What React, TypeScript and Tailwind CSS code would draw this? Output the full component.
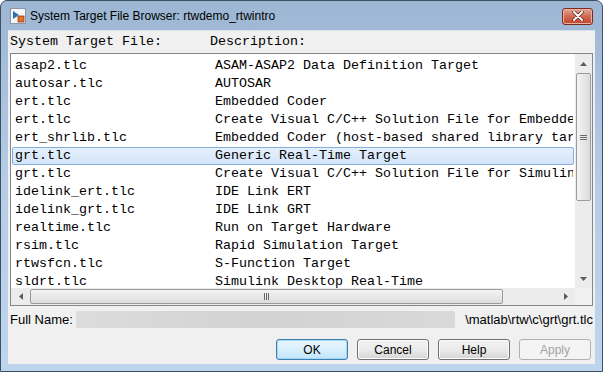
const rows = [
  { file: "asap2.tlc", desc: "ASAM-ASAP2 Data Definition Target" },
  { file: "autosar.tlc", desc: "AUTOSAR" },
  { file: "ert.tlc", desc: "Embedded Coder" },
  { file: "ert.tlc", desc: "Create Visual C/C++ Solution File for Embedded Coder" },
  { file: "ert_shrlib.tlc", desc: "Embedded Coder (host-based shared library target)" },
  { file: "grt.tlc", desc: "Generic Real-Time Target", selected: true },
  { file: "grt.tlc", desc: "Create Visual C/C++ Solution File for Simulink Coder" },
  { file: "idelink_ert.tlc", desc: "IDE Link ERT" },
  { file: "idelink_grt.tlc", desc: "IDE Link GRT" },
  { file: "realtime.tlc", desc: "Run on Target Hardware" },
  { file: "rsim.tlc", desc: "Rapid Simulation Target" },
  { file: "rtwsfcn.tlc", desc: "S-Function Target" },
  { file: "sldrt.tlc", desc: "Simulink Desktop Real-Time" },
]

const mono = "font-['Liberation_Mono','Courier_New',monospace] text-[13.33px] leading-[16px]"
const ui = "font-['Liberation_Sans','Noto_Sans',sans-serif] text-[12px]"

function Arrow({ dir }: { dir: "up" | "down" | "left" | "right" }) {
  const pts = {
    up: "0,4 3.5,0 7,4",
    down: "0,0 7,0 3.5,4",
    left: "4,0 4,7 0,3.5",
    right: "0,0 4,3.5 0,7",
  }[dir]
  const vertical = dir === "up" || dir === "down"
  return (
    <svg width={vertical ? 7 : 4} height={vertical ? 4 : 7}>
      <polygon points={pts} fill="#5b5b5b" />
    </svg>
  )
}

function Button({ label, focus, disabled }: { label: string; focus?: boolean; disabled?: boolean }) {
  return (
    <div
      className={`w-[72px] h-[21px] rounded-[3px] border flex items-center justify-center ${ui} text-[12.5px] ${
        disabled
          ? "border-[#adb2b5] bg-[#f4f4f4] text-[#a3a3a3]"
          : focus
          ? "border-[#3c7fb1] bg-gradient-to-b from-[#eaf6fd] via-[#d9f0fc] to-[#bee6fd] text-black shadow-[inset_0_0_0_1px_#a7d9f5]"
          : "border-[#707070] bg-gradient-to-b from-[#f2f2f2] via-[#ebebeb] to-[#d5d5d5] text-black shadow-[inset_0_0_0_1px_#fcfcfc]"
      }`}
    >
      {label}
    </div>
  )
}

export default function App() {
  return (
    <div className="w-[603px] h-[372px] flex flex-col border border-[#3d4f63] rounded-t-[7px] bg-gradient-to-b from-[#9cb6d3] via-[#b6cde7] to-[#bed5ee] overflow-hidden">
      {/* title bar */}
      <div className="h-[29px] flex items-center pl-[9px] pr-[9px] shrink-0">
        <svg width="16" height="16" viewBox="0 0 16 16" className="shrink-0 mt-[1px]">
          <rect x="0.5" y="0.5" width="15" height="15" fill="#f4f6f8" stroke="#8a99aa" />
          <polygon points="3,3 3,11 9,7" fill="#2f6fb3" />
          <rect x="8" y="8" width="6" height="6" fill="#e0702a" stroke="#9a3d10" strokeWidth="0.8" />
        </svg>
        <span className={`${ui} ml-[4px] mt-[1px] text-black`}>System Target File Browser: rtwdemo_rtwintro</span>
        <div className="flex-1" />
        <div className="w-[31px] h-[17px] mt-[1px] rounded-[3px] border border-[#7d2a1d] bg-gradient-to-b from-[#e2a494] via-[#cf6a55] to-[#c0432c] flex items-center justify-center shadow-[inset_0_0_0_1px_#e9b3a4]">
          <svg width="12" height="10" viewBox="0 0 12 10">
            <path d="M2 1 L10 9 M10 1 L2 9" stroke="#5d2419" strokeWidth="3.4" strokeLinecap="round" />
            <path d="M2 1 L10 9 M10 1 L2 9" stroke="#ffffff" strokeWidth="2" strokeLinecap="round" />
          </svg>
        </div>
      </div>

      {/* content */}
      <div className="flex-1 mx-[7px] mb-[7px] bg-[#f0f0f0] flex flex-col pt-[3px] border-t border-[#d4e0ed]">
        <div className={`flex px-[2px] h-[16px] ${mono} text-black`}>
          <span className="w-[200px]">System Target File:</span>
          <span>Description:</span>
        </div>

        <div className="mt-[3px] mx-[2px] h-[253px] border border-[#828790] bg-white flex flex-col">
          <div className="h-[234px] flex">
            <div className="flex-1 overflow-hidden pt-[3px] min-w-0">
              {rows.map((r, i) => (
                <div
                  key={i}
                  className={`h-[18px] mx-[1px] flex items-center whitespace-nowrap overflow-hidden border rounded-[2px] pl-[2px] ${mono} text-black ${
                    r.selected
                      ? "border-[#84acdd] bg-gradient-to-b from-[#e6f0fc] to-[#d3e4f9]"
                      : "border-transparent"
                  }`}
                >
                  <span className="w-[200px] shrink-0">{r.file}</span>
                  <span>{r.desc}</span>
                </div>
              ))}
            </div>
            {/* vertical scrollbar */}
            <div className="w-[17px] bg-[#ececec] flex flex-col items-center shrink-0">
              <div className="h-[19px] flex items-center justify-center">
                <Arrow dir="up" />
              </div>
              <div className="w-[15px] h-[128px] rounded-[2px] border border-[#9b9b9b] bg-gradient-to-r from-[#f4f4f4] to-[#dcdcdc] flex flex-col items-center justify-center gap-[1px]">
                <div className="w-[7px] h-[1px] bg-[#6a6a6a]" />
                <div className="w-[7px] h-[1px] bg-[#6a6a6a]" />
                <div className="w-[7px] h-[1px] bg-[#6a6a6a]" />
              </div>
              <div className="flex-1" />
              <div className="h-[19px] flex items-center justify-center">
                <Arrow dir="down" />
              </div>
            </div>
          </div>
          {/* horizontal scrollbar */}
          <div className="h-[17px] flex bg-[#ececec]">
            <div className="flex-1 flex items-center">
              <div className="w-[19px] flex justify-center">
                <Arrow dir="left" />
              </div>
              <div className="w-[473px] h-[15px] rounded-[2px] border border-[#9b9b9b] bg-gradient-to-b from-[#f4f4f4] to-[#dcdcdc] flex items-center justify-center gap-[1px]">
                <div className="w-[1px] h-[7px] bg-[#6a6a6a]" />
                <div className="w-[1px] h-[7px] bg-[#6a6a6a]" />
                <div className="w-[1px] h-[7px] bg-[#6a6a6a]" />
              </div>
              <div className="flex-1" />
              <div className="w-[19px] flex justify-center">
                <Arrow dir="right" />
              </div>
            </div>
            <div className="w-[17px] bg-[#f0f0f0]" />
          </div>
        </div>

        {/* full name */}
        <div className="mt-[5px] h-[17px] flex items-center pl-[2px] pr-[2px]">
          <span className={`${ui} text-[13px] text-black w-[66px]`}>Full Name:</span>
          <div className="w-[379px] h-[17px] bg-gradient-to-r from-[#dcdcdc] via-[#d2d2d2] to-[#d9d9d9] rounded-[2px]" />
          <span className={`${ui} text-[13px] text-black ml-auto`}>\matlab\rtw\c\grt\grt.tlc</span>
        </div>

        {/* buttons */}
        <div className="mt-[11px] flex justify-end gap-[9px] pr-[4px]">
          <Button label="OK" focus />
          <Button label="Cancel" />
          <Button label="Help" />
          <Button label="Apply" disabled />
        </div>
      </div>
    </div>
  )
}
